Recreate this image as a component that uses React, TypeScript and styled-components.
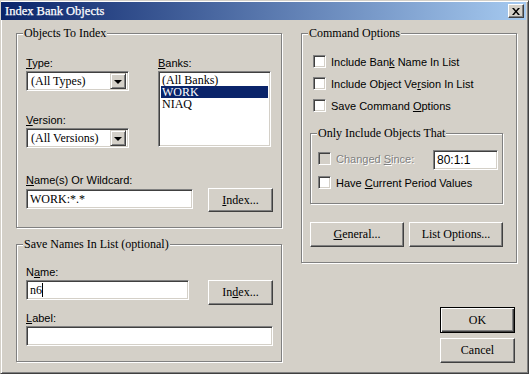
import styled, {createGlobalStyle} from 'styled-components';

const serif = `"Liberation Serif", "Times New Roman", serif`;
const sans = `"Liberation Sans", Arial, sans-serif`;

const GlobalStyle = createGlobalStyle`
html, body {
    margin: 0;
    padding: 0;
    background: #d4d0c8;
}
body {
    width: 529px;
    height: 374px;
    overflow: hidden;
}
`

const Window = styled.div`
width: 529px;
height: 374px;
box-sizing: border-box;
background: #d4d0c8;
border: 1px solid;
border-color: #d4d0c8 #404040 #404040 #d4d0c8;
box-shadow: inset 1px 1px #fff, inset -1px -1px #808080;
padding: 1px 2px 2px 0;
display: flex;
flex-direction: column;
`

const TitleBar = styled.div`
height: 18px;
display: flex;
align-items: center;
justify-content: space-between;
padding: 0 2px 0 4px;
background: linear-gradient(to right, #0a246a, #a6caf0);
color: #fff;
font: 12.5px ${serif};
-webkit-text-stroke: 0.25px #fff;
`

const CloseButton = styled.div`
width: 16px;
height: 14px;
box-sizing: border-box;
display: flex;
align-items: center;
justify-content: center;
background: #d4d0c8;
border: 1px solid;
border-color: #fff #404040 #404040 #fff;
box-shadow: inset -1px -1px #808080;
`

const Body = styled.div`
display: flex;
padding: 13px 0 0 15px;
`

const Column = styled.div<{ $w: number; $ml?: number }>`
display: flex;
flex-direction: column;
width: ${p => p.$w}px;
margin-left: ${p => p.$ml ?? 0}px;
`

const Group = styled.div<{ $h: number; $w?: number; $mt?: number }>`
position: relative;
box-sizing: border-box;
height: ${p => p.$h}px;
width: ${p => (p.$w ? `${p.$w}px` : 'auto')};
margin-top: ${p => p.$mt ?? 0}px;
border: 1px solid #808080;
box-shadow: inset 1px 1px #fff, 1px 1px #fff;
`

const GroupTitle = styled.span`
position: absolute;
top: -8px;
left: 6px;
padding: 0 1px;
background: #d4d0c8;
font: 12px/14px ${serif};
color: #000;
white-space: nowrap;
`

const GroupBody = styled.div<{ $pt: number; $pl: number; $pr?: number }>`
display: flex;
flex-direction: column;
padding: ${p => p.$pt}px ${p => p.$pr ?? 0}px 0 ${p => p.$pl}px;
`

const Row = styled.div<{ $mt?: number; $gap?: number }>`
display: flex;
align-items: flex-start;
margin-top: ${p => p.$mt ?? 0}px;
gap: ${p => p.$gap ?? 0}px;
`

const Stack = styled.div<{ $w?: number; $ml?: number }>`
display: flex;
flex-direction: column;
width: ${p => (p.$w ? `${p.$w}px` : 'auto')};
margin-left: ${p => p.$ml ?? 0}px;
`

const FieldLabel = styled.label<{ $mt?: number }>`
display: block;
height: 14px;
margin-top: ${p => p.$mt ?? 0}px;
font: 11px/12px ${sans};
color: #000;
`

const U = styled.span`
text-decoration: underline;
`

const sunken = `
box-sizing: border-box;
border: 1px solid;
border-color: #808080 #fff #fff #808080;
box-shadow: inset 1px 1px #404040, inset -1px -1px #d4d0c8;
`

const TextBox = styled.div<{ $w: number; $mt?: number; $push?: boolean; $sans?: boolean }>`
${sunken}
width: ${p => p.$w}px;
height: 20px;
margin-top: ${p => p.$mt ?? 0}px;
margin-left: ${p => (p.$push ? 'auto' : '0')};
background: #fff;
padding: 0 0 0 3px;
display: flex;
align-items: center;
font: ${p => (p.$sans ? `12px ${sans}` : `12px ${serif}`)};
color: #000;
white-space: nowrap;
`

const Caret = styled.span`
display: inline-block;
width: 1px;
height: 14px;
background: #000;
`

const Combo = styled.div`
${sunken}
width: 103px;
height: 20px;
background: #fff;
display: flex;
align-items: center;
justify-content: space-between;
padding: 2px 2px 2px 4px;
font: 12px ${serif};
color: #000;
`

const ComboArrow = styled.div`
width: 16px;
height: 16px;
box-sizing: border-box;
display: flex;
align-items: center;
justify-content: center;
background: #d4d0c8;
border: 1px solid;
border-color: #d4d0c8 #404040 #404040 #d4d0c8;
box-shadow: inset 1px 1px #fff, inset -1px -1px #808080;

&::after {
    content: '';
    border-left: 4px solid transparent;
    border-right: 4px solid transparent;
    border-top: 4px solid #000;
    margin-top: 1px;
}
`

const ListBox = styled.div`
${sunken}
width: 113px;
height: 76px;
background: #fff;
padding: 2px;
display: flex;
flex-direction: column;
`

const ListItem = styled.div<{ $selected?: boolean }>`
height: 12px;
line-height: 12px;
padding-left: 1px;
font-family: ${serif};
font-size: 12px;
background: ${p => (p.$selected ? '#0a246a' : 'transparent')};
color: ${p => (p.$selected ? '#fff' : '#000')};
`

const Button = styled.div<{ $w: number; $h: number; $ml?: number; $default?: boolean }>`
box-sizing: border-box;
width: ${p => p.$w}px;
height: ${p => p.$h}px;
margin-left: ${p => p.$ml ?? 0}px;
display: flex;
align-items: center;
justify-content: center;
background: #d4d0c8;
font: 12px ${serif};
color: #000;
border: 1px solid;
border-color: ${p => (p.$default ? '#000' : '#fff #404040 #404040 #fff')};
box-shadow: ${p => (p.$default
        ? 'inset 1px 1px #fff, inset -1px -1px #404040, inset -2px -2px #808080'
        : 'inset -1px -1px #808080, inset 1px 1px #d4d0c8')};
`

const CheckRow = styled.div<{ $mt?: number; $ml?: number }>`
display: flex;
align-items: center;
height: 13px;
margin-top: ${p => p.$mt ?? 0}px;
margin-left: ${p => p.$ml ?? 0}px;
gap: 5px;
font: 11px ${sans};
color: #000;
white-space: nowrap;
`

const CheckBox = styled.div<{ $disabled?: boolean }>`
${sunken}
flex: none;
width: 13px;
height: 13px;
background: ${p => (p.$disabled ? '#d4d0c8' : '#fff')};
`

const CheckText = styled.span<{ $disabled?: boolean }>`
color: ${p => (p.$disabled ? '#808080' : '#000')};
text-shadow: ${p => (p.$disabled ? '1px 1px #fff' : 'none')};
`

const ButtonStack = styled.div`
display: flex;
flex-direction: column;
align-self: flex-end;
margin: 44px 2px 0 0;
gap: 5px;
`

function CloseGlyph() {
    return (
        <svg width="8" height="7" viewBox="0 0 8 7">
            <path d="M0 0h2l2 2.5L6 0h2L5 3.5 8 7H6L4 4.5 2 7H0l3-3.5z" fill="#000" />
        </svg>
    );
}

export default function App() {
    return (
        <>
            <GlobalStyle />
            <Window>
                <TitleBar>
                    <span>Index Bank Objects</span>
                    <CloseButton><CloseGlyph /></CloseButton>
                </TitleBar>
                <Body>
                    <Column $w={266}>
                        <Group $h={195}>
                            <GroupTitle>Objects To Index</GroupTitle>
                            <GroupBody $pt={23} $pl={9}>
                                <Row>
                                    <Stack $w={103}>
                                        <FieldLabel><U>T</U>ype:</FieldLabel>
                                        <Combo>(All Types)<ComboArrow /></Combo>
                                        <FieldLabel $mt={23}><U>V</U>ersion:</FieldLabel>
                                        <Combo>(All Versions)<ComboArrow /></Combo>
                                    </Stack>
                                    <Stack $ml={29}>
                                        <FieldLabel><U>B</U>anks:</FieldLabel>
                                        <ListBox>
                                            <ListItem>(All Banks)</ListItem>
                                            <ListItem $selected>WORK</ListItem>
                                            <ListItem>NIAQ</ListItem>
                                        </ListBox>
                                    </Stack>
                                </Row>
                                <FieldLabel $mt={26}><U>N</U>ame(s) Or Wildcard:</FieldLabel>
                                <Row>
                                    <TextBox $w={167} $mt={1}>WORK:*.*</TextBox>
                                    <Button $w={65} $h={24} $ml={15}><span><U>I</U>ndex...</span></Button>
                                </Row>
                            </GroupBody>
                        </Group>
                        <Group $h={118} $mt={16}>
                            <GroupTitle>Save Names In List (optional)</GroupTitle>
                            <GroupBody $pt={21} $pl={9}>
                                <FieldLabel>N<U>a</U>me:</FieldLabel>
                                <Row>
                                    <TextBox $w={163}>n6<Caret /></TextBox>
                                    <Button $w={65} $h={25} $ml={19}><span>In<U>d</U>ex...</span></Button>
                                </Row>
                                <FieldLabel $mt={7}><U>L</U>abel:</FieldLabel>
                                <TextBox $w={247} />
                            </GroupBody>
                        </Group>
                    </Column>
                    <Column $w={216} $ml={19}>
                        <Group $h={230}>
                            <GroupTitle>Command Options</GroupTitle>
                            <GroupBody $pt={21} $pl={8}>
                                <CheckRow $ml={3}>
                                    <CheckBox />
                                    <CheckText>Include Ban<U>k</U> Name In List</CheckText>
                                </CheckRow>
                                <CheckRow $ml={3} $mt={9}>
                                    <CheckBox />
                                    <CheckText>Include Object Ve<U>r</U>sion In List</CheckText>
                                </CheckRow>
                                <CheckRow $ml={3} $mt={9}>
                                    <CheckBox />
                                    <CheckText>Save Command <U>O</U>ptions</CheckText>
                                </CheckRow>
                                <Group $h={71} $w={193} $mt={21}>
                                    <GroupTitle>Only Include Objects That</GroupTitle>
                                    <GroupBody $pt={16} $pl={7} $pr={4}>
                                        <Row>
                                            <CheckRow $mt={2}>
                                                <CheckBox $disabled />
                                                <CheckText $disabled>Changed <U>S</U>ince:</CheckText>
                                            </CheckRow>
                                            <TextBox $w={65} $push $sans>80:1:1</TextBox>
                                        </Row>
                                        <CheckRow $mt={6}>
                                            <CheckBox />
                                            <CheckText>Have <U>C</U>urrent Period Values</CheckText>
                                        </CheckRow>
                                    </GroupBody>
                                </Group>
                                <Row $mt={18} $gap={5}>
                                    <Button $w={94} $h={25}><span><U>G</U>eneral...</span></Button>
                                    <Button $w={94} $h={25}>List Options...</Button>
                                </Row>
                            </GroupBody>
                        </Group>
                        <ButtonStack>
                            <Button $w={75} $h={26} $default>OK</Button>
                            <Button $w={75} $h={25}>Cancel</Button>
                        </ButtonStack>
                    </Column>
                </Body>
            </Window>
        </>
    );
}
